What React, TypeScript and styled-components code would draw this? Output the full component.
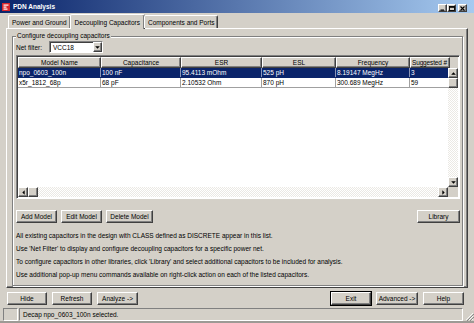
import React from 'react';
import styled, { createGlobalStyle, css } from 'styled-components';

const GlobalStyle = createGlobalStyle`
  html, body {
    margin: 0;
    padding: 0;
    background: #d4d0c8;
  }
  body {
    font-family: "Liberation Sans", Arial, sans-serif;
    font-size: 6.5px;
    color: #000;
  }
  * {
    box-sizing: border-box;
  }
`;

const raised = css`
  border: 1px solid;
  border-color: #fff #404040 #404040 #fff;
  box-shadow: inset -1px -1px #808080;
  background: #d4d0c8;
`;

const sunken = css`
  border: 1px solid;
  border-color: #808080 #fff #fff #808080;
  box-shadow: inset 1px 1px #404040;
`;

const Window = styled.div`
  width: 474px;
  height: 323px;
  display: flex;
  flex-direction: column;
  background: #d4d0c8;
  border-bottom: 2px solid #9d9a95;
  overflow: hidden;
`;

const TitleBar = styled.div`
  height: 13px;
  flex: none;
  display: flex;
  align-items: center;
  gap: 3px;
  padding: 0 7px 0 2px;
  background: linear-gradient(90deg, #0a246a 0%, #a6caf0 100%);
`;

const TitleText = styled.span`
  flex: 1;
  color: #fff;
  font-weight: bold;
  font-size: 6.5px;
`;

const Controls = styled.div`
  display: flex;
  align-self: flex-end;
  margin-bottom: 1px;
`;

const CtrlButton = styled.div<{ $gap?: boolean }>`
  ${raised};
  width: 9px;
  height: 8px;
  margin-left: ${p => (p.$gap ? 2 : 0)}px;
  display: flex;
  align-items: center;
  justify-content: center;
`;

const TabRow = styled.div`
  height: 15px;
  flex: none;
  display: flex;
  align-items: flex-end;
  padding-left: 8px;
  position: relative;
  z-index: 1;
`;

const Tab = styled.div<{ $active?: boolean }>`
  height: ${p => (p.$active ? 15 : 13)}px;
  margin: ${p => (p.$active ? '0 -1px -1px -1px' : '0')};
  padding: 0 ${p => (p.$active ? 4 : 3)}px;
  display: flex;
  align-items: center;
  white-space: nowrap;
  background: #d4d0c8;
  border: 1px solid;
  border-bottom: none;
  border-color: #fff #404040 #404040 #fff;
  border-radius: 2px 2px 0 0;
  box-shadow: inset -1px 0 #808080;
`;

const Panel = styled.div`
  ${raised};
  height: 260px;
  flex: none;
  margin: 0 6px;
  padding: 3px 4px 1px 5px;
  display: flex;
`;

const GroupBox = styled.fieldset`
  flex: 1;
  margin: 0;
  padding: 0 2px 3px 3px;
  border: 1px solid #808080;
  box-shadow: inset 1px 1px #fff, 1px 1px #fff;
  min-width: 0;
`;

const Legend = styled.legend`
  padding: 0 1px;
  height: 8px;
  line-height: 8px;
  background: #d4d0c8;
`;

const GroupBody = styled.div`
  display: flex;
  flex-direction: column;
`;

const FilterRow = styled.div`
  display: flex;
  align-items: center;
  gap: 7px;
  margin-top: 1px;
  height: 12px;
`;

const Combo = styled.div`
  ${sunken};
  width: 54px;
  height: 12px;
  background: #fff;
  display: flex;
  align-items: center;
  padding: 0 0 0 3px;
`;

const ComboValue = styled.span`
  flex: 1;
`;

const ComboButton = styled.div`
  ${raised};
  width: 9px;
  height: 10px;
  display: flex;
  align-items: center;
  justify-content: center;
`;

const Table = styled.div`
  ${sunken};
  margin-top: 2px;
  width: 444px;
  height: 144px;
  background: #fff;
  display: flex;
  flex-direction: column;
  padding: 1px;
`;

const gridCols = '83px 80px 81px 74px 74px 40px';

const HeaderRow = styled.div`
  display: grid;
  grid-template-columns: ${gridCols} 1fr;
  height: 11px;
  flex: none;
  background: #d4d0c8;
`;

const HeaderCell = styled.div<{ $left?: boolean }>`
  ${raised};
  display: flex;
  align-items: center;
  justify-content: ${p => (p.$left ? 'flex-start' : 'center')};
  padding-left: ${p => (p.$left ? 1 : 0)}px;
  letter-spacing: ${p => (p.$left ? '-0.15px' : '0')};
  white-space: nowrap;
  overflow: hidden;
`;

const Body = styled.div`
  flex: 1;
  display: grid;
  grid-template-columns: 1fr 10px;
  grid-template-rows: 1fr 10px;
  min-height: 0;
`;

const Rows = styled.div`
  background: #fff;
  overflow: hidden;
`;

const Row = styled.div<{ $selected?: boolean }>`
  display: grid;
  grid-template-columns: ${gridCols};
  width: 432px;
  height: 10px;
  background: ${p => (p.$selected ? '#0a246a' : '#fff')};
  color: ${p => (p.$selected ? '#fff' : '#000')};
  border-bottom: 1px solid ${p => (p.$selected ? '#0a246a' : '#a0a0a0')};
`;

const Cell = styled.div<{ $selected?: boolean }>`
  padding-left: 1px;
  line-height: 9px;
  white-space: nowrap;
  overflow: hidden;
  border-right: 1px solid ${p => (p.$selected ? '#8a95b5' : '#a0a0a0')};
`;

const track = css`
  background: repeating-conic-gradient(#fff 0 25%, #ebe9e4 0 50%) 0 0 / 2px 2px;
`;

const VScroll = styled.div`
  display: flex;
  flex-direction: column;
  ${track};
`;

const HScroll = styled.div`
  display: flex;
  ${track};
`;

const ScrollTrack = styled.div`
  flex: 1;
`;

const ScrollButton = styled.div`
  ${raised};
  width: 10px;
  height: 10px;
  flex: none;
  display: flex;
  align-items: center;
  justify-content: center;
`;

const Corner = styled.div`
  background: #d4d0c8;
`;

const ActionRow = styled.div`
  display: flex;
  gap: 4px;
  margin-top: 11px;
  height: 13px;
`;

const Spacer = styled.div`
  flex: 1;
`;

const Button = styled.button<{ $w: number; $default?: boolean }>`
  ${raised};
  width: ${p => p.$w}px;
  height: 13px;
  padding: 0;
  font: inherit;
  color: #000;
  white-space: nowrap;
  ${p =>
    p.$default &&
    css`
      outline: 1px solid #000;
      outline-offset: 0;
    `}
`;

const Notes = styled.div`
  margin-top: 6px;
  line-height: 13px;
  white-space: nowrap;
`;

const BottomRow = styled.div`
  display: flex;
  align-items: center;
  gap: 5px;
  margin-top: 4px;
  height: 13px;
  padding: 0 10px 0 7px;
  flex: none;
`;

const StatusBar = styled.div`
  display: flex;
  margin-top: 3px;
  height: 13px;
  flex: none;
  padding-left: 3px;
  gap: 1px;
`;

const StatusPane = styled.div<{ $grow?: boolean }>`
  border: 1px solid;
  border-color: #808080 #fff #fff #808080;
  width: ${p => (p.$grow ? 'auto' : '15px')};
  flex: ${p => (p.$grow ? 1 : 'none')};
  padding-left: 3px;
  display: flex;
  align-items: center;
`;

const Grip = styled.div`
  width: 10px;
  flex: none;
  display: flex;
  align-items: flex-end;
  justify-content: flex-end;
`;

const columns = [
  'Model Name',
  'Capacitance',
  'ESR',
  'ESL',
  'Frequency',
  'Suggested #',
];

const rows = [
  ['npo_0603_100n', '100 nF', '95.4113 mOhm', '525 pH', '8.19147 MegHz', '3'],
  ['x5r_1812_68p', '68 pF', '2.10532 Ohm', '870 pH', '300.689 MegHz', '59'],
];

const notes = [
  'All existing capacitors in the design with CLASS defined as DISCRETE appear in this list.',
  "Use 'Net Filter' to display and configure decoupling capacitors for a specific power net.",
  "To configure capacitors in other libraries, click 'Library' and select additional capacitors to be included for analysis.",
  'Use additional pop-up menu commands available on right-click action on each of the listed capacitors.',
];

const Arrow = ({ dir }: { dir: 'up' | 'down' | 'left' | 'right' }) => {
  const pts = {
    up: '0,4 3.5,0.5 7,4',
    down: '0,0.5 3.5,4 7,0.5',
    left: '4,0 0.5,3.5 4,7',
    right: '0.5,0 4,3.5 0.5,7',
  }[dir];
  const vertical = dir === 'up' || dir === 'down';
  return (
    <svg width={vertical ? 5 : 3} height={vertical ? 3 : 5} viewBox={vertical ? '0 0 7 4.5' : '0 0 4.5 7'}>
      <polygon points={pts} fill="#000" />
    </svg>
  );
};

const AppIcon = () => (
  <svg width="8" height="8" viewBox="0 0 8 8">
    <rect x="0" y="0" width="8" height="8" fill="#d8262c" />
    <rect x="1.5" y="1.5" width="5" height="1.2" fill="#fff" />
    <rect x="1.5" y="3.5" width="3" height="1.2" fill="#fff" />
    <rect x="1.5" y="5.5" width="4" height="1.2" fill="#fff" />
  </svg>
);

export default function App() {
  return (
    <>
      <GlobalStyle />
      <Window>
        <TitleBar>
          <AppIcon />
          <TitleText>PDN Analysis</TitleText>
          <Controls>
            <CtrlButton>
              <svg width="5" height="5" viewBox="0 0 5 5">
                <rect x="0.5" y="3.5" width="3.5" height="1.2" fill="#000" />
              </svg>
            </CtrlButton>
            <CtrlButton>
              <svg width="6" height="5" viewBox="0 0 6 5">
                <rect x="0.5" y="0.5" width="5" height="4" fill="none" stroke="#000" strokeWidth="0.9" />
                <rect x="0.5" y="0.5" width="5" height="1.3" fill="#000" />
              </svg>
            </CtrlButton>
            <CtrlButton $gap>
              <svg width="5" height="5" viewBox="0 0 5 5">
                <path d="M0.5 0.5 L4.5 4.5 M4.5 0.5 L0.5 4.5" stroke="#000" strokeWidth="1.1" />
              </svg>
            </CtrlButton>
          </Controls>
        </TitleBar>

        <TabRow>
          <Tab>Power and Ground</Tab>
          <Tab $active>Decoupling Capacitors</Tab>
          <Tab>Components and Ports</Tab>
        </TabRow>

        <Panel>
          <GroupBox>
            <Legend>Configure decoupling capacitors</Legend>
            <GroupBody>
              <FilterRow>
                <span>Net filter:</span>
                <Combo>
                  <ComboValue>VCC18</ComboValue>
                  <ComboButton>
                    <Arrow dir="down" />
                  </ComboButton>
                </Combo>
              </FilterRow>

              <Table>
                <HeaderRow>
                  {columns.map(c => (
                    <HeaderCell key={c} $left={c === 'Suggested #'}>
                      {c}
                    </HeaderCell>
                  ))}
                  <div />
                </HeaderRow>
                <Body>
                  <Rows>
                    {rows.map((r, i) => (
                      <Row key={r[0]} $selected={i === 0}>
                        {r.map((v, j) => (
                          <Cell key={j} $selected={i === 0}>
                            {v}
                          </Cell>
                        ))}
                      </Row>
                    ))}
                  </Rows>
                  <VScroll>
                    <ScrollButton>
                      <Arrow dir="up" />
                    </ScrollButton>
                    <ScrollButton />
                    <ScrollTrack />
                    <ScrollButton>
                      <Arrow dir="down" />
                    </ScrollButton>
                  </VScroll>
                  <HScroll>
                    <ScrollButton>
                      <Arrow dir="left" />
                    </ScrollButton>
                    <ScrollButton />
                    <ScrollTrack />
                    <ScrollButton>
                      <Arrow dir="right" />
                    </ScrollButton>
                  </HScroll>
                  <Corner />
                </Body>
              </Table>

              <ActionRow>
                <Button $w={41}>Add Model</Button>
                <Button $w={41}>Edit Model</Button>
                <Button $w={47}>Delete Model</Button>
                <Spacer />
                <Button $w={43}>Library</Button>
              </ActionRow>

              <Notes>
                {notes.map(n => (
                  <div key={n}>{n}</div>
                ))}
              </Notes>
            </GroupBody>
          </GroupBox>
        </Panel>

        <BottomRow>
          <Button $w={40}>Hide</Button>
          <Button $w={40}>Refresh</Button>
          <Button $w={41}>Analyze -&gt;</Button>
          <Spacer />
          <Button $w={40} $default>
            Exit
          </Button>
          <Button $w={42}>Advanced -&gt;</Button>
          <Button $w={41}>Help</Button>
        </BottomRow>

        <StatusBar>
          <StatusPane />
          <StatusPane $grow>Decap npo_0603_100n selected.</StatusPane>
          <Grip>
            <svg width="10" height="10" viewBox="0 0 10 10">
              <path d="M9 2 L2 9 M9 5 L5 9 M9 8 L8 9" stroke="#fff" strokeWidth="0.8" />
              <path d="M10 3 L3 10 M10 6 L6 10" stroke="#808080" strokeWidth="0.9" />
            </svg>
          </Grip>
        </StatusBar>
      </Window>
    </>
  );
}
